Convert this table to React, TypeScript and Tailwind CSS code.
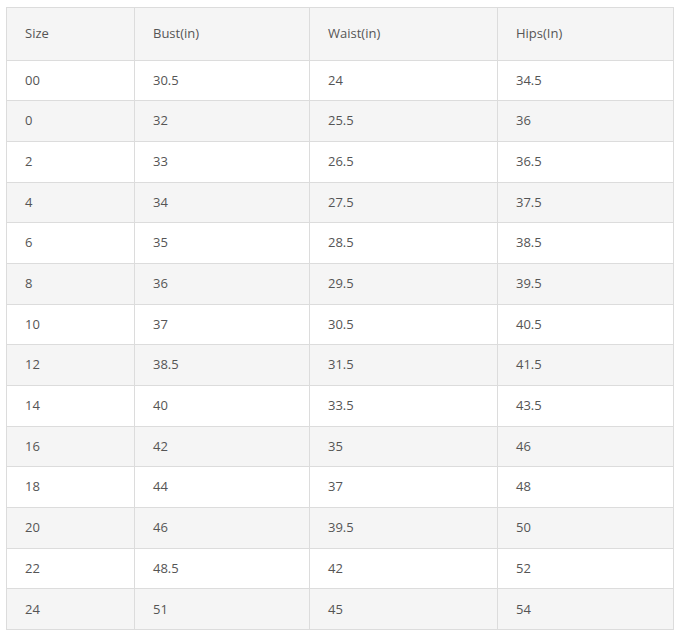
const rows: [string, string, string, string][] = [
  ["00", "30.5", "24", "34.5"],
  ["0", "32", "25.5", "36"],
  ["2", "33", "26.5", "36.5"],
  ["4", "34", "27.5", "37.5"],
  ["6", "35", "28.5", "38.5"],
  ["8", "36", "29.5", "39.5"],
  ["10", "37", "30.5", "40.5"],
  ["12", "38.5", "31.5", "41.5"],
  ["14", "40", "33.5", "43.5"],
  ["16", "42", "35", "46"],
  ["18", "44", "37", "48"],
  ["20", "46", "39.5", "50"],
  ["22", "48.5", "42", "52"],
  ["24", "51", "45", "54"],
];

const headers = ["Size", "Bust(in)", "Waist(in)", "Hips(In)"];

export default function App() {
  return (
    <div className="bg-white min-h-[635px] pt-[7px] pl-[6px] font-['Open_Sans',sans-serif] text-[13px] text-[#555]">
      <table className="border-collapse table-fixed w-[667px]">
        <colgroup>
          <col className="w-[128px]" />
          <col className="w-[175px]" />
          <col className="w-[188px]" />
          <col className="w-[176px]" />
        </colgroup>
        <thead>
          <tr className="bg-[#f5f5f5]">
            {headers.map((h) => (
              <th
                key={h}
                className="border border-[#dcdcdc] h-[52.5px] px-[18px] text-left font-normal"
              >
                {h}
              </th>
            ))}
          </tr>
        </thead>
        <tbody>
          {rows.map((r, i) => (
            <tr key={r[0]} className={i % 2 === 0 ? "bg-white" : "bg-[#f5f5f5]"}>
              {r.map((c, j) => (
                <td
                  key={j}
                  className="border border-[#dcdcdc] h-[40.7px] px-[18px] text-left"
                >
                  {c}
                </td>
              ))}
            </tr>
          ))}
        </tbody>
      </table>
    </div>
  );
}
